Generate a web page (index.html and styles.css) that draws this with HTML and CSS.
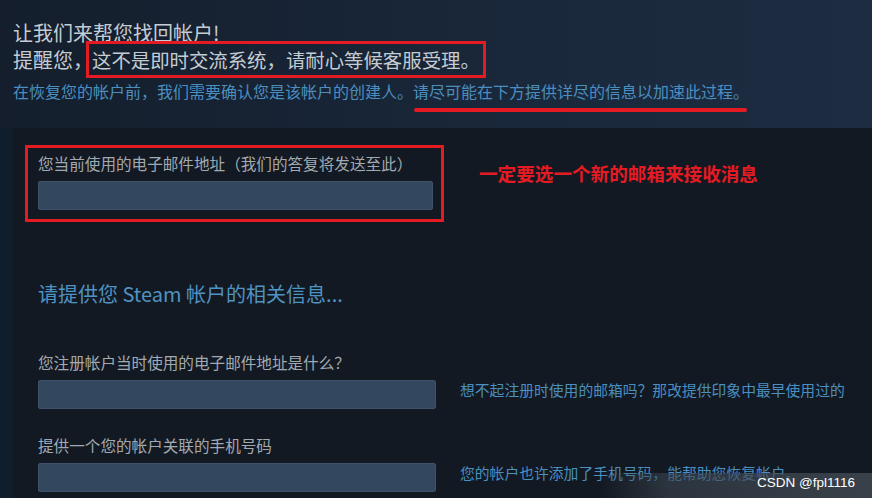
FILE: index.html
```html
<!DOCTYPE html>
<html lang="zh-CN">

<head>
    <meta charset="utf-8">
    <meta name="viewport" content="width=device-width, initial-scale=1.0">
    <title>Steam 帐户找回</title>
    <link rel="stylesheet" href="styles.css">
</head>

<body>
    <header class="kopf">
        <h1 class="titel">让我们来帮您找回帐户!</h1>
        <div class="hinweis">
            提醒您，<span class="rahmen">这不是即时交流系统，请耐心等候客服受理。</span>
        </div>
        <p class="intro">在恢复您的帐户前，我们需要确认您是该帐户的创建人。<span class="strich">请尽可能在下方提供详尽的信息以加速此过程。</span></p>
    </header>

    <main class="inhalt">
        <div class="reihe-oben">
            <div class="feld-rahmen">
                <label class="etikett">您当前使用的电子邮件地址（我们的答复将发送至此）</label>
                <div class="eingabe"></div>
            </div>
            <p class="notiz">一定要选一个新的邮箱来接收消息</p>
        </div>

        <h2 class="abschnitt">请提供您 Steam 帐户的相关信息...</h2>

        <div class="feld">
            <label class="etikett">您注册帐户当时使用的电子邮件地址是什么？</label>
            <div class="eingabe"></div>
            <p class="tipp">想不起注册时使用的邮箱吗？那改提供印象中最早使用过的</p>
        </div>

        <div class="feld">
            <label class="etikett">提供一个您的帐户关联的手机号码</label>
            <div class="eingabe"></div>
            <p class="tipp">您的帐户也许添加了手机号码，能帮助您恢复帐户。</p>
        </div>
    </main>

    <!-- wasserzeichen unten rechts -->
    <div class="marke">
        <span>CSDN @fpl1116</span>
    </div>
</body>

</html>
```

FILE: styles.css
```css
html,
body {
    height: 498px;
    overflow: hidden;
}

body {
    margin: 0;
    font-family: "Noto Sans CJK SC", "Microsoft YaHei", sans-serif;
    background-color: #0f1d2c;
    position: relative;
}

.kopf {
    background: linear-gradient(to right, #141e2c, #1a283b 60%, #1d2c41);
    padding: 20px 0 26px 13px;
}

.titel {
    margin: 0;
    font-size: 20px;
    font-weight: normal;
    line-height: 26px;
    color: #c5cdd4;
}

.hinweis {
    display: flex;
    align-items: center;
    height: 26px;
    font-size: 20px;
    color: #c5cdd4;
    white-space: nowrap;
}

.rahmen {
    display: flex;
    align-items: center;
    height: 31px;
    margin-left: -7px;
    padding: 0 3px;
    border: 3px solid #e51b24;
    font-size: 19.4px;
}

.intro {
    margin: 8px 0 0;
    font-size: 16px;
    line-height: 22px;
    color: #4a8fc0;
    white-space: nowrap;
}

.strich {
    position: relative;
}

.strich::after {
    content: "";
    position: absolute;
    left: 1px;
    right: 2px;
    bottom: -9px;
    height: 4px;
    border-radius: 2px;
    background-color: #e51b24;
}

.inhalt {
    margin-left: 13px;
    background-color: #131922;
    padding: 17px 0 10px 12px;
}

.reihe-oben {
    display: flex;
    align-items: flex-start;
}

.feld-rahmen {
    width: 395px;
    border: 3px solid #e51b24;
    padding: 4px 8px 9px 10px;
}

.etikett {
    display: block;
    font-size: 15.6px;
    line-height: 22px;
    color: #a2aab1;
}

.eingabe {
    height: 27px;
    border: 1px solid #3e526b;
    border-radius: 2px;
    background-color: #33475f;
    margin-top: 7px;
}

.notiz {
    margin: 15px 0 0 35px;
    font-size: 18.6px;
    font-weight: bold;
    line-height: 26px;
    color: #e51b24;
}

.abschnitt {
    margin: 58px 0 0 13px;
    font-size: 20px;
    font-weight: normal;
    line-height: 28px;
    color: #4f93c2;
}

.feld {
    display: grid;
    grid-template-columns: 398px auto;
    column-gap: 24px;
    margin: 43px 0 0 13px;
}

.feld + .feld {
    margin-top: 25px;
}

.feld .etikett {
    grid-column: 1 / 3;
}

.tipp {
    margin: 0;
    font-size: 14.8px;
    line-height: 20px;
    color: #4a8fc0;
    white-space: nowrap;
    align-self: start;
    margin-top: 7px;
}

.marke {
    position: absolute;
    right: 0;
    bottom: 0;
    width: 272px;
    height: 25px;
    background: linear-gradient(to right, rgba(60, 70, 82, 0), rgba(60, 70, 82, 0.6) 25%, rgba(70, 78, 88, 0.75));
    display: flex;
    justify-content: flex-end;
    align-items: center;
}

.marke span {
    margin-right: 17px;
    margin-bottom: 7px;
    font-family: "Liberation Sans", sans-serif;
    font-size: 13.5px;
    color: #ffffff;
}
```
